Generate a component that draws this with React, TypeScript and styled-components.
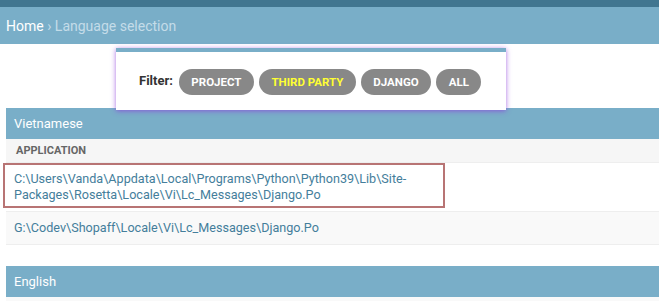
import styled, { createGlobalStyle } from "styled-components";

const GlobalStyle = createGlobalStyle`
  html, body {
    margin: 0;
    padding: 0;
    background: #ffffff;
    font-family: Roboto, "Liberation Sans", Arial, sans-serif;
    color: #333333;
  }
`;

const TopBar = styled.div`
  height: 7px;
  background: #417690;
`;

const Breadcrumbs = styled.div`
  height: 37px;
  display: flex;
  align-items: center;
  padding: 0 6px;
  background: #79aec8;
  color: #c4dce8;
  font-size: 14px;
`;

const CrumbLink = styled.a`
  color: #ffffff;
  text-decoration: none;
`;

const Content = styled.main`
  padding: 4px 0 0 6px;
`;

const FilterBox = styled.div`
  position: relative;
  z-index: 2;
  width: 390px;
  box-sizing: border-box;
  margin: 0 0 -2px 110px;
  padding: 17px 23px 15px;
  background: #ffffff;
  border-top: 4px solid #79aec8;
  box-shadow: 0 1px 5px rgba(140, 60, 220, 0.75);
  display: flex;
  align-items: center;
  gap: 5px;
`;

const FilterLabel = styled.span`
  margin: 0 1px 4px 0;
  font-size: 13px;
  font-weight: 700;
  color: #333333;
  white-space: nowrap;
`;

const Pill = styled.button<{ $active?: boolean }>`
  flex-shrink: 0;
  height: 26px;
  padding: 0 12.5px;
  border: none;
  border-radius: 13px;
  background: #888888;
  color: ${(p) => (p.$active ? "#ffff33" : "#ffffff")};
  font-family: inherit;
  font-size: 11.5px;
  font-weight: 700;
  text-transform: uppercase;
  white-space: nowrap;
  cursor: pointer;
`;

const Module = styled.section`
  margin-bottom: 21px;
`;

const Caption = styled.h2`
  margin: 0;
  padding: 8px 8px;
  background: #79aec8;
  color: #ffffff;
  font-size: 13px;
  font-weight: 400;
  line-height: 15px;
`;

const SectionHead = styled.div`
  padding: 5px 10px;
  background: #f6f6f6;
  border-bottom: 1px solid #eeeeee;
  color: #666666;
  font-size: 11px;
  font-weight: 700;
  line-height: 13px;
  text-transform: uppercase;
`;

const Row = styled.div<{ $alt?: boolean }>`
  position: relative;
  padding: 8px 8px;
  background: ${(p) => (p.$alt ? "#f9f9f9" : "#ffffff")};
  border-bottom: 1px solid #eeeeee;
`;

const PathLink = styled.a`
  display: block;
  width: 420px;
  color: #447e9b;
  font-size: 12.6px;
  line-height: 16px;
  text-decoration: none;
`;

const Highlight = styled.div`
  position: absolute;
  left: -3px;
  top: 0;
  width: 442px;
  height: 45px;
  box-sizing: border-box;
  border: 2px solid #b87474;
  pointer-events: none;
`;

const filters = [
  { label: "Project" },
  { label: "Third party", active: true },
  { label: "Django" },
  { label: "All" },
];

export default function App() {
  return (
    <>
      <GlobalStyle />
      <TopBar />
      <Breadcrumbs>
        <CrumbLink href="#">Home</CrumbLink>
        &nbsp;› Language selection
      </Breadcrumbs>
      <Content>
        <FilterBox>
          <FilterLabel>Filter:</FilterLabel>
          {filters.map((f) => (
            <Pill key={f.label} type="button" $active={f.active}>
              {f.label}
            </Pill>
          ))}
        </FilterBox>
        <Module>
          <Caption>Vietnamese</Caption>
          <SectionHead>Application</SectionHead>
          <Row>
            <PathLink href="#">
              C:\Users\Vanda\Appdata\Local\Programs\Python\Python39\Lib\Site-Packages\Rosetta\Locale\Vi\Lc_Messages\Django.Po
            </PathLink>
            <Highlight />
          </Row>
          <Row $alt>
            <PathLink href="#">G:\Codev\Shopaff\Locale\Vi\Lc_Messages\Django.Po</PathLink>
          </Row>
        </Module>
        <Module>
          <Caption>English</Caption>
          <Row $alt />
        </Module>
      </Content>
    </>
  );
}
